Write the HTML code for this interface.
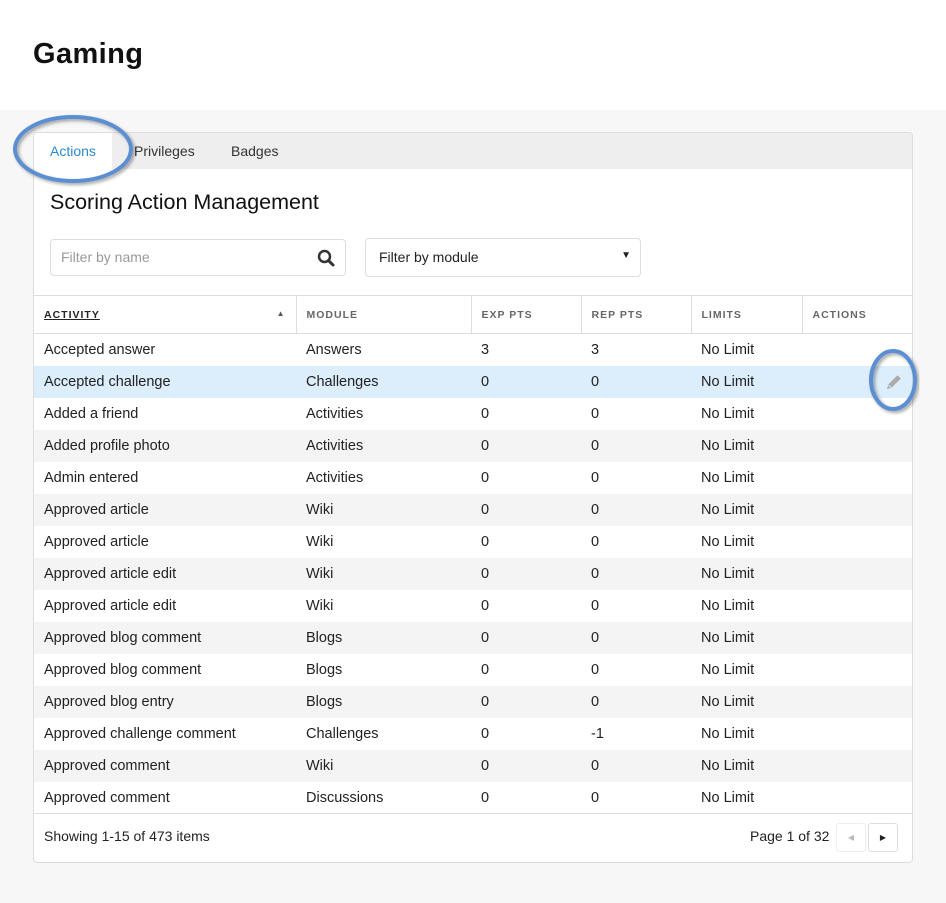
<!DOCTYPE html>
<html><head><style>
*{box-sizing:border-box;margin:0;padding:0}
body{width:946px;height:903px;background:#f7f7f7;font-family:"Liberation Sans",sans-serif;color:#222;position:relative;overflow:hidden}
.hdr{position:absolute;left:0;top:0;width:946px;height:110px;background:#fff}
.hdr h1{position:absolute;left:33px;top:38px;font-size:29px;font-weight:bold;letter-spacing:.4px;color:#111}
.card{position:absolute;left:33px;top:132px;width:880px;height:731px;background:#fff;border:1px solid #ddd;border-radius:4px;overflow:hidden}
.tabs{height:36px;background:#eee;position:relative}
.tab{position:absolute;top:10px;font-size:14px;color:#333}
.tab.a{left:0;top:0;width:78px;height:36px;background:#fff;color:#2a8bd4;padding:10px 0 0 16px}
.title{position:absolute;left:16px;top:57px;font-size:21.5px;color:#111}
.inp{position:absolute;top:106px;height:37px;border:1px solid #ddd;border-radius:4px;font-size:14px;padding:9px 0 0 10px}
table{position:absolute;left:0;top:162px;width:879px;border-collapse:collapse;font-size:14.5px}
th{height:38px;border-top:1px solid #ddd;border-bottom:1px solid #ddd;border-right:1px solid #ddd;text-align:left;font-size:10.5px;letter-spacing:1px;color:#666;font-weight:bold;padding-left:10px}
th:last-child{border-right:none}
td{height:32px;padding-left:10px;color:#222}
tr.g td{background:#f4f4f4}
tr.h td{background:#dcedfb}
.foot{position:absolute;left:0;top:680px;width:879px;border-top:1px solid #ddd;height:50px;font-size:14px}
.pb{position:absolute;top:9px;width:30px;height:29px;border:1px solid #ddd;border-radius:3px;background:#fff}
</style></head><body>
<div class="hdr"><h1>Gaming</h1></div>
<div class="card">
<div class="tabs"><div class="tab a">Actions</div><div class="tab" style="left:100px">Privileges</div><div class="tab" style="left:197px">Badges</div></div>
<div class="title">Scoring Action Management</div>
<div class="inp" style="left:16px;width:296px;color:#999">Filter by name
<svg style="position:absolute;right:10px;top:9px" width="18" height="18" viewBox="0 0 18 18"><circle cx="7.5" cy="7.5" r="5.5" fill="none" stroke="#333" stroke-width="2.5"/><path d="M11.5 11.5L16 16" stroke="#333" stroke-width="3" stroke-linecap="round"/></svg></div>
<div class="inp" style="left:331px;top:105px;height:39px;width:276px;color:#222;padding-top:10px;padding-left:13px">Filter by module<span style="position:absolute;right:9px;top:11px;font-size:10px">▼</span></div>
<table>
<tr><th style="width:262px;color:#222"><u>ACTIVITY</u><span style="float:right;margin-right:10px;font-size:8px;color:#555">▲</span></th><th style="width:175px">MODULE</th><th style="width:110px">EXP PTS</th><th style="width:110px">REP PTS</th><th style="width:111px">LIMITS</th><th>ACTIONS</th></tr>
<tr><td>Accepted answer</td><td>Answers</td><td>3</td><td>3</td><td>No Limit</td><td></td></tr>
<tr class="h"><td>Accepted challenge</td><td>Challenges</td><td>0</td><td>0</td><td>No Limit</td><td style="text-align:right;padding-right:10px"><svg width="18" height="18" viewBox="0 0 18 18" style="vertical-align:middle"><path d="M2 16l1.2-4.5L12.5 2.2l3.3 3.3-9.3 9.3z" fill="#aaa"/><path d="M3.5 12l2.5 2.5" stroke="#dcedfb" stroke-width="1"/></svg></td></tr>
<tr><td>Added a friend</td><td>Activities</td><td>0</td><td>0</td><td>No Limit</td><td></td></tr>
<tr class="g"><td>Added profile photo</td><td>Activities</td><td>0</td><td>0</td><td>No Limit</td><td></td></tr>
<tr><td>Admin entered</td><td>Activities</td><td>0</td><td>0</td><td>No Limit</td><td></td></tr>
<tr class="g"><td>Approved article</td><td>Wiki</td><td>0</td><td>0</td><td>No Limit</td><td></td></tr>
<tr><td>Approved article</td><td>Wiki</td><td>0</td><td>0</td><td>No Limit</td><td></td></tr>
<tr class="g"><td>Approved article edit</td><td>Wiki</td><td>0</td><td>0</td><td>No Limit</td><td></td></tr>
<tr><td>Approved article edit</td><td>Wiki</td><td>0</td><td>0</td><td>No Limit</td><td></td></tr>
<tr class="g"><td>Approved blog comment</td><td>Blogs</td><td>0</td><td>0</td><td>No Limit</td><td></td></tr>
<tr><td>Approved blog comment</td><td>Blogs</td><td>0</td><td>0</td><td>No Limit</td><td></td></tr>
<tr class="g"><td>Approved blog entry</td><td>Blogs</td><td>0</td><td>0</td><td>No Limit</td><td></td></tr>
<tr><td>Approved challenge comment</td><td>Challenges</td><td>0</td><td>-1</td><td>No Limit</td><td></td></tr>
<tr class="g"><td>Approved comment</td><td>Wiki</td><td>0</td><td>0</td><td>No Limit</td><td></td></tr>
<tr><td>Approved comment</td><td>Discussions</td><td>0</td><td>0</td><td>No Limit</td><td></td></tr>
</table>
<div class="foot"><span style="position:absolute;left:10px;top:14px">Showing 1-15 of 473 items</span><span style="position:absolute;left:716px;top:14px">Page 1 of 32</span>
<div class="pb" style="left:802px;border-color:#eee;color:#bbb;font-size:8px;text-align:center;line-height:27px">◀</div><div class="pb" style="left:834px;font-size:8px;text-align:center;line-height:27px">▶</div></div>
</div>
<svg style="position:absolute;left:0;top:0" width="946" height="903">
<defs><filter id="s"><feDropShadow dx="2" dy="2" stdDeviation="1.5" flood-color="#000" flood-opacity=".35"/></filter></defs>
<ellipse cx="73" cy="149" rx="58" ry="32" fill="none" stroke="#5b8ed2" stroke-width="4" filter="url(#s)"/>
<ellipse cx="893" cy="380" rx="22" ry="29" fill="none" stroke="#5b8ed2" stroke-width="4" filter="url(#s)"/>
</svg>
</body></html>
